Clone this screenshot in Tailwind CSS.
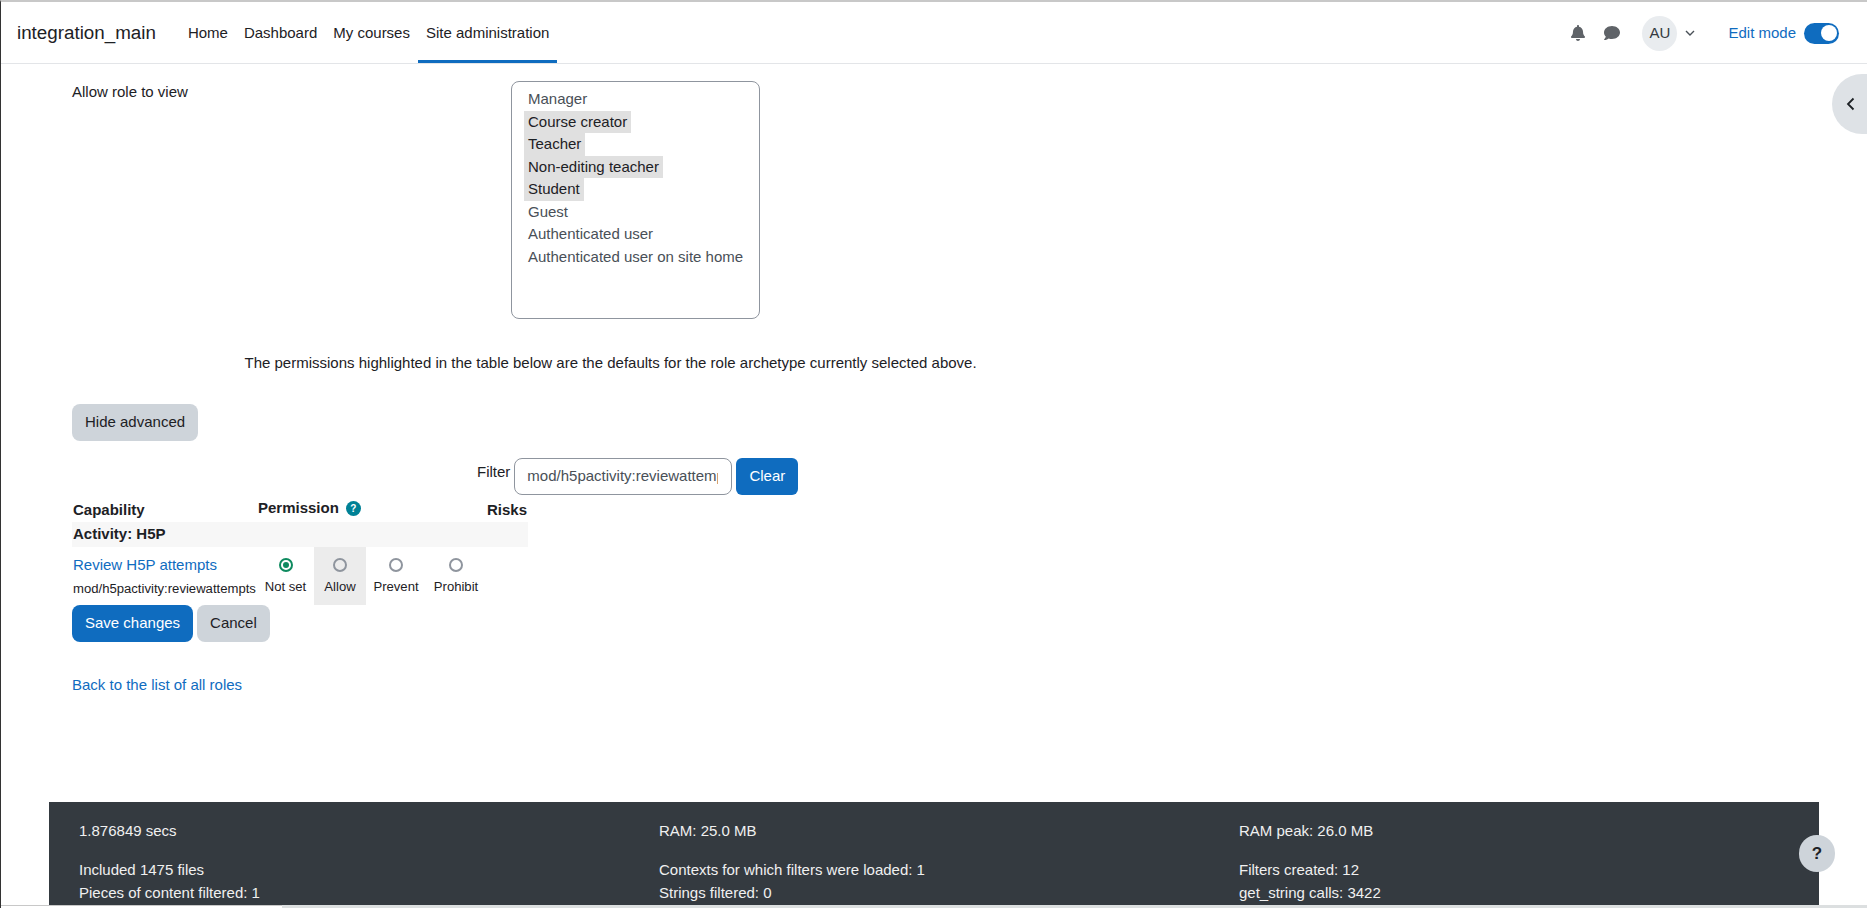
<!DOCTYPE html>
<html lang="en">
<head>
    <meta charset="UTF-8">
    <title>Define roles</title>
    <script src="https://cdn.jsdelivr.net/npm/@tailwindcss/browser@4"></script>
</head>
<body class="h-[908px] overflow-hidden bg-white text-[15px] text-[#1d2125] font-['Liberation_Sans',sans-serif] relative border-l border-[#333] border-t-2 border-t-[#c8c8c8]">

    <!-- navbar -->
    <nav class="h-[62px] border-b border-[#e3e5e8] flex items-center pl-4 pr-[28px]">
        <a class="text-[18.8px] mr-[24px] mb-[-1px]">integration_main</a>
        <div class="flex h-full">
            <a class="px-2 flex items-center pt-[1px] text-[#1d2125]">Home</a>
            <a class="px-2 flex items-center pt-[1px] text-[#1d2125]">Dashboard</a>
            <a class="px-2 flex items-center pt-[1px] text-[#1d2125]">My courses</a>
            <a class="px-2 flex items-center pt-[4px] text-[#1d2125] border-b-[3px] border-[#0f6cbf]">Site administration</a>
        </div>
        <div class="ml-auto flex items-center pt-[1px]">
            <svg class="w-[14px] h-[16px] text-[#5f6368]" viewBox="0 0 448 512" fill="currentColor"><path d="M224 512c35.3 0 64-28.700 64-64H160c0 35.300 28.700 64 64 64zm215.400-149.700c-19.300-20.800-55.500-52-55.500-154.300 0-77.700-54.500-139.900-127.900-155.200V32c0-17.700-14.300-32-32-32s-32 14.300-32 32v20.800C118.600 68.100 64.100 130.300 64.100 208c0 102.300-36.200 133.500-55.500 154.300-6 6.400-8.700 14.100-8.600 21.700.1 16.400 13 32 32.100 32h383.800c19.100 0 32-15.600 32.100-32 .1-7.600-2.600-15.300-8.600-21.700z"/></svg>
            <svg class="w-[16px] h-[16px] ml-[19px] text-[#5f6368]" viewBox="0 0 512 512" fill="currentColor"><path d="M256 32C114.600 32 0 125.100 0 240c0 49.600 21.400 95 57 130.700C44.500 421.100 2.700 466 2.200 466.500c-2.200 2.300-2.800 5.700-1.500 8.700S4.800 480 8 480c66.300 0 116-31.800 140.600-51.400 32.700 12.300 69 19.400 107.400 19.400 141.400 0 256-93.100 256-208S397.400 32 256 32z"/></svg>
            <div class="w-[35px] h-[35px] rounded-full bg-[#e9ecef] ml-[22px] flex items-center justify-center text-[15px] text-[#343a40]">AU</div>
            <svg class="w-[10px] h-[6px] ml-[8px] text-[#495057]" viewBox="0 0 10 6" fill="none" stroke="currentColor" stroke-width="1.400"><path d="M1 1l4 4 4-4"/></svg>
            <span class="ml-[33px] text-[#0f6cbf]">Edit mode</span>
            <div class="w-[35px] h-[21px] rounded-full bg-[#0f6cbf] ml-[8px] flex items-center justify-end pr-[2px]">
                <div class="w-[16px] h-[16px] rounded-full bg-white"></div>
            </div>
        </div>
    </nav>

    <!-- drawer toggle -->
    <div class="absolute right-0 top-[72px] w-[35px] h-[60px] rounded-l-full bg-[#dee2e6] flex items-center justify-center">
        <svg class="w-[9px] h-[14px] text-[#1d2125] ml-[2px]" viewBox="0 0 9 14" fill="none" stroke="currentColor" stroke-width="1.800"><path d="M7.500 1.500L2 7l5.500 5.500"/></svg>
    </div>

    <main class="pl-[71px]">
        <div class="flex pt-[17px]">
            <div class="w-[439px]">Allow role to view</div>
            <div class="w-[249px] h-[238px] border border-[#8f959e] rounded-[8px] pl-[12px] pt-[6px] leading-[22.500px] text-[#495057]">
                <div class="px-[4px] w-fit">Manager</div>
                <div class="px-[4px] w-fit bg-[#e0e0e0] text-[#1d2125]">Course creator</div>
                <div class="px-[4px] w-fit bg-[#e0e0e0] text-[#1d2125]">Teacher</div>
                <div class="px-[4px] w-fit bg-[#e0e0e0] text-[#1d2125]">Non-editing teacher</div>
                <div class="px-[4px] w-fit bg-[#e0e0e0] text-[#1d2125]">Student</div>
                <div class="px-[4px] w-fit">Guest</div>
                <div class="px-[4px] w-fit">Authenticated user</div>
                <div class="px-[4px] w-fit">Authenticated user on site home</div>
            </div>
        </div>

        <p class="mt-[32.500px] ml-[172.500px]">The permissions highlighted in the table below are the defaults for the role archetype currently selected above.</p>

        <button class="block mt-[30px] h-[37px] px-[13px] rounded-[8px] bg-[#ced4da] text-[#1d2125]">Hide advanced</button>

        <div class="flex items-start mt-[17px] ml-[405px]">
            <span class="mt-[3px] mr-[4px]">Filter</span>
            <div class="w-[218px] h-[37px] border border-[#8f959e] rounded-[8px] pl-[12px] flex items-center text-[#495057]">
                <div class="w-[191px] overflow-hidden whitespace-nowrap">mod/h5pactivity:reviewattempts</div>
            </div>
            <button class="ml-[4px] h-[37px] w-[62px] rounded-[6px] bg-[#0f6cbf] text-white">Clear</button>
        </div>

        <!-- capability table -->
        <div class="w-[456px] mt-[2px]">
            <div class="flex h-[25px] items-center font-bold px-[1px]">
                <div class="w-[185px] pt-[1px]">Capability</div>
                <div class="flex items-center gap-[7px] mb-[2px]">Permission
                    <span class="w-[15px] h-[15px] rounded-full bg-[#008196] text-white text-[10px] flex items-center justify-center">?</span>
                </div>
                <div class="ml-auto pt-[1px]">Risks</div>
            </div>
            <div class="h-[25px] bg-[#f7f7f7] flex items-center font-bold px-[1px]">Activity: H5P</div>
            <div class="flex h-[58px]">
                <div class="w-[185px] shrink-0 px-[1px] pt-[7px]">
                    <a class="block text-[#0f6cbf]">Review H5P attempts</a>
                    <div class="text-[13.125px] mt-[2px] whitespace-nowrap">mod/h5pactivity:reviewattempts</div>
                </div>
                <div class="w-[57px] shrink-0 flex flex-col items-center pt-[11px] text-[13.125px]">
                    <span class="w-[14px] h-[14px] rounded-full border-2 border-[#0e8a5f] flex items-center justify-center"><span class="w-[6px] h-[6px] rounded-full bg-[#0e8a5f]"></span></span>
                    <span class="mt-[5px]">Not set</span>
                </div>
                <div class="w-[52px] shrink-0 bg-[#ececec] flex flex-col items-center pt-[11px] text-[13.125px]">
                    <span class="w-[14px] h-[14px] rounded-full border-2 border-[#8f959e]"></span>
                    <span class="mt-[5px]">Allow</span>
                </div>
                <div class="w-[60px] shrink-0 flex flex-col items-center pt-[11px] text-[13.125px]">
                    <span class="w-[14px] h-[14px] rounded-full border-2 border-[#8f959e]"></span>
                    <span class="mt-[5px]">Prevent</span>
                </div>
                <div class="w-[60px] shrink-0 flex flex-col items-center pt-[11px] text-[13.125px]">
                    <span class="w-[14px] h-[14px] rounded-full border-2 border-[#8f959e]"></span>
                    <span class="mt-[5px]">Prohibit</span>
                </div>
            </div>
        </div>

        <div class="flex gap-[4px]">
            <button class="h-[37px] px-[13px] rounded-[8px] bg-[#0f6cbf] text-white">Save changes</button>
            <button class="h-[37px] px-[13px] rounded-[8px] bg-[#ced4da] text-[#1d2125]">Cancel</button>
        </div>

        <a class="block mt-[32px] text-[#0f6cbf]">Back to the list of all roles</a>
    </main>

    <!-- perf footer -->
    <footer class="absolute left-[48px] top-[800px] w-[1770px] h-[106px] bg-[#343a40] text-[#f0f0f0] pl-[30px] pt-[18px]">
        <div class="grid grid-cols-[580px_580px_1fr]">
            <div>1.876849 secs</div>
            <div>RAM: 25.0 MB</div>
            <div>RAM peak: 26.0 MB</div>
        </div>
        <div class="grid grid-cols-[580px_580px_1fr] mt-[16px] gap-y-[1px]">
            <div>Included 1475 files</div>
            <div>Contexts for which filters were loaded: 1</div>
            <div>Filters created: 12</div>
            <div>Pieces of content filtered: 1</div>
            <div>Strings filtered: 0</div>
            <div>get_string calls: 3422</div>
        </div>
    </footer>

    <!-- help button -->
    <div class="absolute left-[1798px] top-[833px] w-[36px] h-[37px] rounded-full bg-[#ced4da] flex items-center justify-center text-[17px] font-bold text-[#1d2125]">?</div>

    <!-- browser scrollbar strip -->
    <div class="absolute left-0 right-0 bottom-0 h-[3px] flex">
        <div class="w-[281px] bg-white border-t border-[#c8c8c8]"></div>
        <div class="flex-1 bg-[#dcdfe0]"></div>
    </div>
</body>
</html>
